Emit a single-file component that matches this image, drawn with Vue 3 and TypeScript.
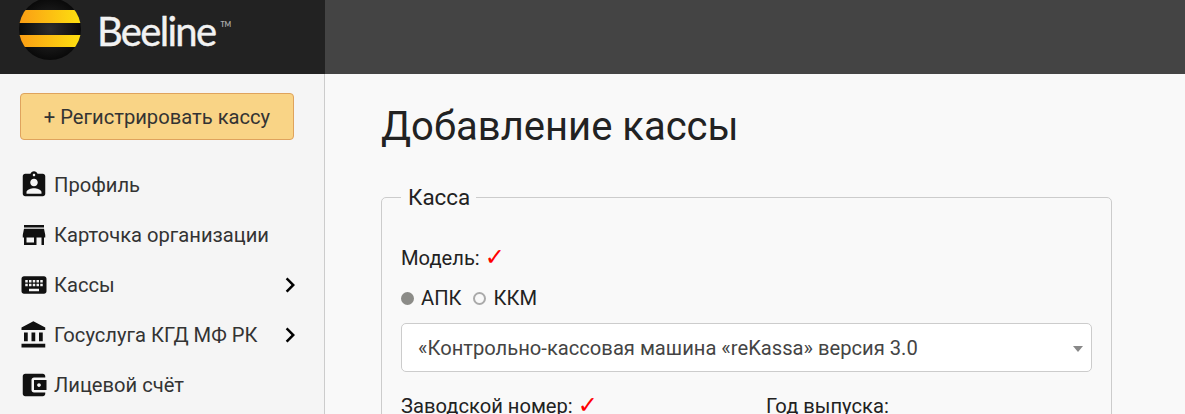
<script setup lang="ts">
interface MenuItem {
  label: string
  icon: string
  hasArrow?: boolean
}

const menu: MenuItem[] = [
  {
    label: 'Профиль',
    icon: 'M19 3h-4.18C14.4 1.84 13.3 1 12 1c-1.3 0-2.4.84-2.82 2H5c-1.1 0-2 .9-2 2v14c0 1.1.9 2 2 2h14c1.1 0 2-.9 2-2V5c0-1.1-.9-2-2-2zm-7 0c.55 0 1 .45 1 1s-.45 1-1 1-1-.45-1-1 .45-1 1-1zm0 4c1.66 0 3 1.34 3 3s-1.34 3-3 3-3-1.34-3-3 1.34-3 3-3zm6 12H6v-1.4c0-2 4-3.1 6-3.1s6 1.1 6 3.1V19z'
  },
  {
    label: 'Карточка организации',
    icon: 'M20 4H4v2h16V4zm1 10v-2l-1-5H4l-1 5v2h1v6h10v-6h4v6h2v-6h1zm-9 4H6v-4h6v4z'
  },
  {
    label: 'Кассы',
    hasArrow: true,
    icon: 'M20 5H4c-1.1 0-1.99.9-1.99 2L2 17c0 1.1.9 2 2 2h16c1.1 0 2-.9 2-2V7c0-1.1-.9-2-2-2zm-9 3h2v2h-2V8zm0 3h2v2h-2v-2zM8 8h2v2H8V8zm0 3h2v2H8v-2zm-1 2H5v-2h2v2zm0-3H5V8h2v2zm9 7H8v-2h8v2zm0-4h-2v-2h2v2zm0-3h-2V8h2v2zm3 3h-2v-2h2v2zm0-3h-2V8h2v2z'
  },
  {
    label: 'Госуслуга КГД МФ РК',
    hasArrow: true,
    icon: 'M4 10v7h3v-7H4zm6 0v7h3v-7h-3zM2 22h19v-3H2v3zm14-12v7h3v-7h-3zm-4.5-9L2 6v2h19V6l-9.5-5z'
  },
  {
    label: 'Лицевой счёт',
    icon: 'M21 18v1c0 1.1-.9 2-2 2H5c-1.11 0-2-.9-2-2V5c0-1.1.89-2 2-2h14c1.1 0 2 .9 2 2v1h-9c-1.11 0-2 .9-2 2v8c0 1.1.89 2 2 2h9zm-9-2h10V8H12v8zm4-2.5c-.83 0-1.5-.67-1.5-1.5s.67-1.5 1.5-1.5 1.5.67 1.5 1.5-.67 1.5-1.5 1.5z'
  }
]
</script>

<template>
  <div class="page">
    <header class="topbar">
      <div class="brand">
        <svg class="logo" viewBox="0 0 62 62" width="62" height="62">
          <defs>
            <linearGradient id="stripe" x1="0" x2="1" y1="0" y2="0">
              <stop offset="0" stop-color="#fb9d14" />
              <stop offset="1" stop-color="#fde010" />
            </linearGradient>
            <radialGradient id="shade" cx="0.5" cy="0.5" r="0.55">
              <stop offset="0" stop-color="#2c2c2c" />
              <stop offset="1" stop-color="#060606" />
            </radialGradient>
            <clipPath id="ball"><circle cx="31" cy="31" r="31" /></clipPath>
          </defs>
          <circle cx="31" cy="31" r="31" fill="url(#shade)" />
          <g clip-path="url(#ball)">
            <rect x="0" y="12" width="62" height="13" fill="url(#stripe)" />
            <rect x="0" y="37" width="62" height="12" fill="url(#stripe)" />
          </g>
        </svg>
        <span class="wordmark">Beeline<sup>TM</sup></span>
      </div>
    </header>

    <div class="body">
      <aside class="sidebar">
        <button class="register">+ Регистрировать кассу</button>
        <nav class="menu">
          <a v-for="item in menu" :key="item.label" class="menu-item">
            <svg class="menu-icon" viewBox="0 0 24 24"><path :d="item.icon" /></svg>
            <span class="menu-label">{{ item.label }}</span>
            <svg v-if="item.hasArrow" class="menu-arrow" viewBox="0 0 24 24">
              <path d="M10 6L8.59 7.41 13.17 12l-4.58 4.59L10 18l6-6z" />
            </svg>
          </a>
        </nav>
      </aside>

      <main class="content">
        <h1>Добавление кассы</h1>
        <fieldset class="box">
          <legend>Касса</legend>
          <div class="label">Модель: <span class="req">✓</span></div>
          <div class="radios">
            <label class="radio"><i class="dot on"></i>АПК</label>
            <label class="radio"><i class="dot"></i>ККМ</label>
          </div>
          <div class="select">
            <span>«Контрольно-кассовая машина «reKassa» версия 3.0</span>
            <i class="caret"></i>
          </div>
          <div class="cols">
            <div class="label">Заводской номер: <span class="req">✓</span></div>
            <div class="label">Год выпуска:</div>
          </div>
        </fieldset>
      </main>
    </div>
  </div>
</template>

<style>
html, body {
  margin: 0;
  overflow: hidden;
}
</style>

<style scoped>
.page {
  height: 414px;
  overflow: hidden;
  font-family: Roboto, "Liberation Sans", sans-serif;
  color: #222;
  background: #f9f9f9;
}
.topbar {
  height: 74px;
  background: #444;
}
.brand {
  width: 325px;
  height: 74px;
  background: #222;
  display: flex;
  align-items: flex-start;
  padding-left: 19px;
  box-sizing: border-box;
  overflow: hidden;
}
.logo {
  margin-top: -2px;
  flex: none;
}
.wordmark {
  margin: 4px 0 0 16px;
  font-family: Lato, sans-serif;
  font-size: 40px;
  line-height: 54px;
  letter-spacing: -1.7px;
  -webkit-text-stroke: 0.4px #f2f2f2;
  color: #f2f2f2;
}
.wordmark sup {
  font-size: 7px;
  font-weight: 700;
  line-height: 0;
  vertical-align: 19px;
  letter-spacing: 0;
  -webkit-text-stroke: 0;
  margin-left: 5px;
  color: #aaa;
}
.body {
  display: flex;
}
.sidebar {
  width: 325px;
  height: 340px;
  box-sizing: border-box;
  flex: none;
  background: #f5f5f5;
  border-right: 1px solid #ccc;
  padding: 19px 30px 0 20px;
}
.register {
  display: block;
  width: 274px;
  height: 47px;
  background: #f9d486;
  border: 1px solid #dfa35d;
  border-radius: 4px;
  font: 400 20.16px Roboto, sans-serif;
  color: #333;
  padding: 0;
}
.menu {
  margin-top: 20px;
}
.menu-item {
  display: flex;
  align-items: center;
  height: 50px;
  margin-left: -1px;
  color: #333;
  font-size: 20.16px;
}
.menu-icon {
  width: 30px;
  height: 30px;
  flex: none;
  fill: #111;
  margin-right: 5px;
}
.menu-label {
  flex: 1;
}
.menu-arrow {
  width: 30px;
  height: 30px;
  fill: #000;
  flex: none;
  margin-right: -11px;
}
.content {
  flex: 1;
  padding: 0 73px 0 56px;
  min-width: 0;
}
h1 {
  margin: 29px 0 0;
  font-size: 40px;
  font-weight: 400;
  line-height: 48px;
  color: #222;
}
.box {
  margin: 33px 0 0;
  padding: 36px 19px 60px;
  border: 1px solid #ccc;
  border-radius: 5px;
  min-width: 0;
}
.box legend {
  margin-left: 0;
  padding: 0 6px 0 7px;
  font-size: 22.4px;
  line-height: 26px;
}
.label {
  font-size: 20.16px;
  line-height: 24px;
}
.req {
  font-family: "DejaVu Sans", sans-serif;
  font-size: 24px;
  line-height: 20px;
  color: #f00;
}
.radios {
  display: flex;
  gap: 12px;
  margin-top: 16px;
}
.radio {
  display: flex;
  align-items: center;
  font-size: 20.16px;
  line-height: 24px;
}
.dot {
  width: 13px;
  height: 13px;
  box-sizing: border-box;
  border: 2px solid #aaa;
  border-radius: 50%;
  margin-right: 7px;
}
.dot.on {
  background: #8c8c88;
  border-color: #8c8c88;
}
.select {
  display: flex;
  align-items: center;
  justify-content: space-between;
  height: 49px;
  box-sizing: border-box;
  margin-top: 13px;
  padding: 0 8px 0 16px;
  background: #fff;
  border: 1px solid #ccc;
  border-radius: 5px;
  font-size: 20.16px;
  color: #444;
}
.caret {
  width: 0;
  height: 0;
  border-style: solid;
  border-width: 6px 5px 0;
  border-color: #888 transparent transparent;
  margin-top: 3px;
}
.cols {
  display: grid;
  grid-template-columns: 365px 1fr;
  margin-top: 22px;
}
</style>
